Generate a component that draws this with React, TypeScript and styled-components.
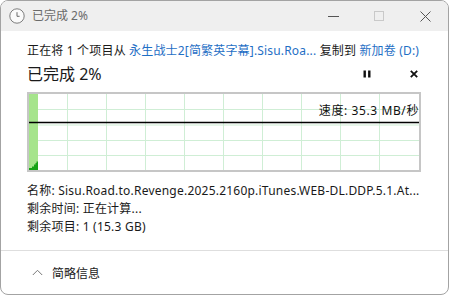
import React from 'react'
import styled, { createGlobalStyle } from 'styled-components'

const GlobalStyle = createGlobalStyle`
  html, body {
    margin: 0;
    padding: 0;
    background: #ffffff;
  }
  * {
    box-sizing: border-box;
  }
`

const font = `"Noto Sans", "Noto Sans CJK SC", sans-serif`

const Window = styled.div`
  width: 449px;
  height: 295px;
  border: 1px solid #a3a3a3;
  border-radius: 8px;
  overflow: hidden;
  display: flex;
  flex-direction: column;
  background: #ffffff;
  font-family: ${font};
  color: #1a1a1a;
`

const TitleBar = styled.div`
  height: 30px;
  flex-shrink: 0;
  background: #efefef;
  display: flex;
  align-items: center;
`

const TitleIcon = styled.div`
  width: 31px;
  display: flex;
  justify-content: center;
  padding-left: 1px;
`

const TitleText = styled.div`
  flex: 1;
  font-size: 12px;
  color: #6a6a6a;
  line-height: 16px;
`

const CaptionButton = styled.div<{ $dim?: boolean }>`
  width: 46px;
  height: 30px;
  display: flex;
  align-items: center;
  justify-content: center;
  color: ${p => (p.$dim ? '#c9c9c9' : '#555555')};
`

const Content = styled.div`
  flex: 1;
  padding: 11px 27px 0 26px;
  display: flex;
  flex-direction: column;
  letter-spacing: 0.17px;
`

const CopyLine = styled.div`
  font-size: 12px;
  line-height: 18px;
  height: 18px;
  white-space: nowrap;
`

const Link = styled.span`
  color: #1f6fc5;
`

const StatusRow = styled.div`
  height: 22px;
  margin-top: 3px;
  display: flex;
  align-items: center;
`

const StatusText = styled.div`
  flex: 1;
  font-size: 16px;
  line-height: 22px;
  letter-spacing: 0;
`

const Actions = styled.div`
  display: flex;
  align-items: center;
  gap: 35px;
  padding-right: 1px;
`

const ActionButton = styled.div`
  width: 12px;
  height: 22px;
  display: flex;
  align-items: center;
  justify-content: center;
  color: #111111;
`

const Graph = styled.div`
  position: relative;
  margin-top: 7px;
  height: 80px;
  border: 2px solid #c6c6c6;
  background: #ffffff;
  svg {
    display: block;
  }
`

const SpeedLabel = styled.div`
  position: absolute;
  right: 0;
  top: 9px;
  font-size: 12px;
  line-height: 16px;
  letter-spacing: 0.6px;
  color: #111111;
  white-space: nowrap;
`

const Details = styled.div`
  margin-top: 10px;
  font-size: 12px;
  line-height: 18px;
  letter-spacing: 0.22px;
`

const DetailLine = styled.div`
  height: 18px;
  white-space: nowrap;
`

const Footer = styled.div`
  height: 44px;
  flex-shrink: 0;
  border-top: 1px solid #dedede;
  display: flex;
  align-items: center;
  padding-left: 31px;
  gap: 9px;
  font-size: 12px;
  color: #1a1a1a;
`

function ClockIcon() {
  return (
    <svg width="16" height="16" viewBox="0 0 16 16">
      <circle cx="8" cy="8" r="7.2" fill="#fafafa" stroke="#7d7d7d" strokeWidth="1" />
      <path d="M8 4.2 V8.3 H10.6" fill="none" stroke="#6a6a6a" strokeWidth="1" />
    </svg>
  )
}

function SpeedChart() {
  const w = 390
  const h = 76
  const cols = Array.from({ length: 9 }, (_, i) => 39 * (i + 1) - 1)
  const rows = [15, 30.5, 46, 61]
  return (
    <svg width={w} height={h} viewBox={`0 0 ${w} ${h}`}>
      {cols.map(x => (
        <line key={'c' + x} x1={x + 0.5} y1="0" x2={x + 0.5} y2={h} stroke="#cfeed5" strokeWidth="1" />
      ))}
      {rows.map(y => (
        <line key={'r' + y} x1="0" y1={y + 0.5} x2={w} y2={y + 0.5} stroke="#cfeed5" strokeWidth="1" />
      ))}
      <rect x="0" y="0" width="9" height={h} fill="#a6e48c" />
      <path d="M0 76 V74 H3 V72.5 H5 V70.5 H6.5 V69 H7.5 V67.5 H9 V76 Z" fill="#17a217" />
      <line x1="0" y1="28.5" x2={w} y2="28.5" stroke="#000000" strokeWidth="1.3" />
    </svg>
  )
}

export default function App() {
  return (
    <>
      <GlobalStyle />
      <Window>
        <TitleBar>
          <TitleIcon>
            <ClockIcon />
          </TitleIcon>
          <TitleText>已完成 2%</TitleText>
          <CaptionButton>
            <svg width="11" height="11" viewBox="0 0 11 11">
              <line x1="0" y1="5.5" x2="11" y2="5.5" stroke="currentColor" strokeWidth="1" />
            </svg>
          </CaptionButton>
          <CaptionButton $dim>
            <svg width="10" height="10" viewBox="0 0 10 10">
              <rect x="0.5" y="0.5" width="9" height="9" fill="none" stroke="currentColor" strokeWidth="1" />
            </svg>
          </CaptionButton>
          <CaptionButton>
            <svg width="11" height="11" viewBox="0 0 11 11">
              <path d="M0.5 0.5 L10.5 10.5 M10.5 0.5 L0.5 10.5" stroke="currentColor" strokeWidth="1" />
            </svg>
          </CaptionButton>
        </TitleBar>
        <Content>
          <CopyLine>
            正在将 1 个项目从 <Link>永生战士2[简繁英字幕].Sisu.Roa...</Link> 复制到 <Link>新加卷 (D:)</Link>
          </CopyLine>
          <StatusRow>
            <StatusText>已完成 2%</StatusText>
            <Actions>
              <ActionButton>
                <svg width="8" height="8" viewBox="0 0 8 8">
                  <rect x="0.5" y="0.5" width="2.4" height="7" fill="currentColor" />
                  <rect x="5.1" y="0.5" width="2.4" height="7" fill="currentColor" />
                </svg>
              </ActionButton>
              <ActionButton>
                <svg width="8" height="8" viewBox="0 0 8 8">
                  <path d="M0.8 0.8 L7.2 7.2 M7.2 0.8 L0.8 7.2" stroke="currentColor" strokeWidth="1.8" />
                </svg>
              </ActionButton>
            </Actions>
          </StatusRow>
          <Graph>
            <SpeedChart />
            <SpeedLabel>速度: 35.3 MB/秒</SpeedLabel>
          </Graph>
          <Details>
            <DetailLine>名称: Sisu.Road.to.Revenge.2025.2160p.iTunes.WEB-DL.DDP.5.1.At...</DetailLine>
            <DetailLine>剩余时间: 正在计算...</DetailLine>
            <DetailLine>剩余项目: 1 (15.3 GB)</DetailLine>
          </Details>
        </Content>
        <Footer>
          <svg width="11" height="7" viewBox="0 0 11 7">
            <path d="M0.8 6 L5.5 1.3 L10.2 6" fill="none" stroke="#777777" strokeWidth="1" />
          </svg>
          <span>简略信息</span>
        </Footer>
      </Window>
    </>
  )
}
